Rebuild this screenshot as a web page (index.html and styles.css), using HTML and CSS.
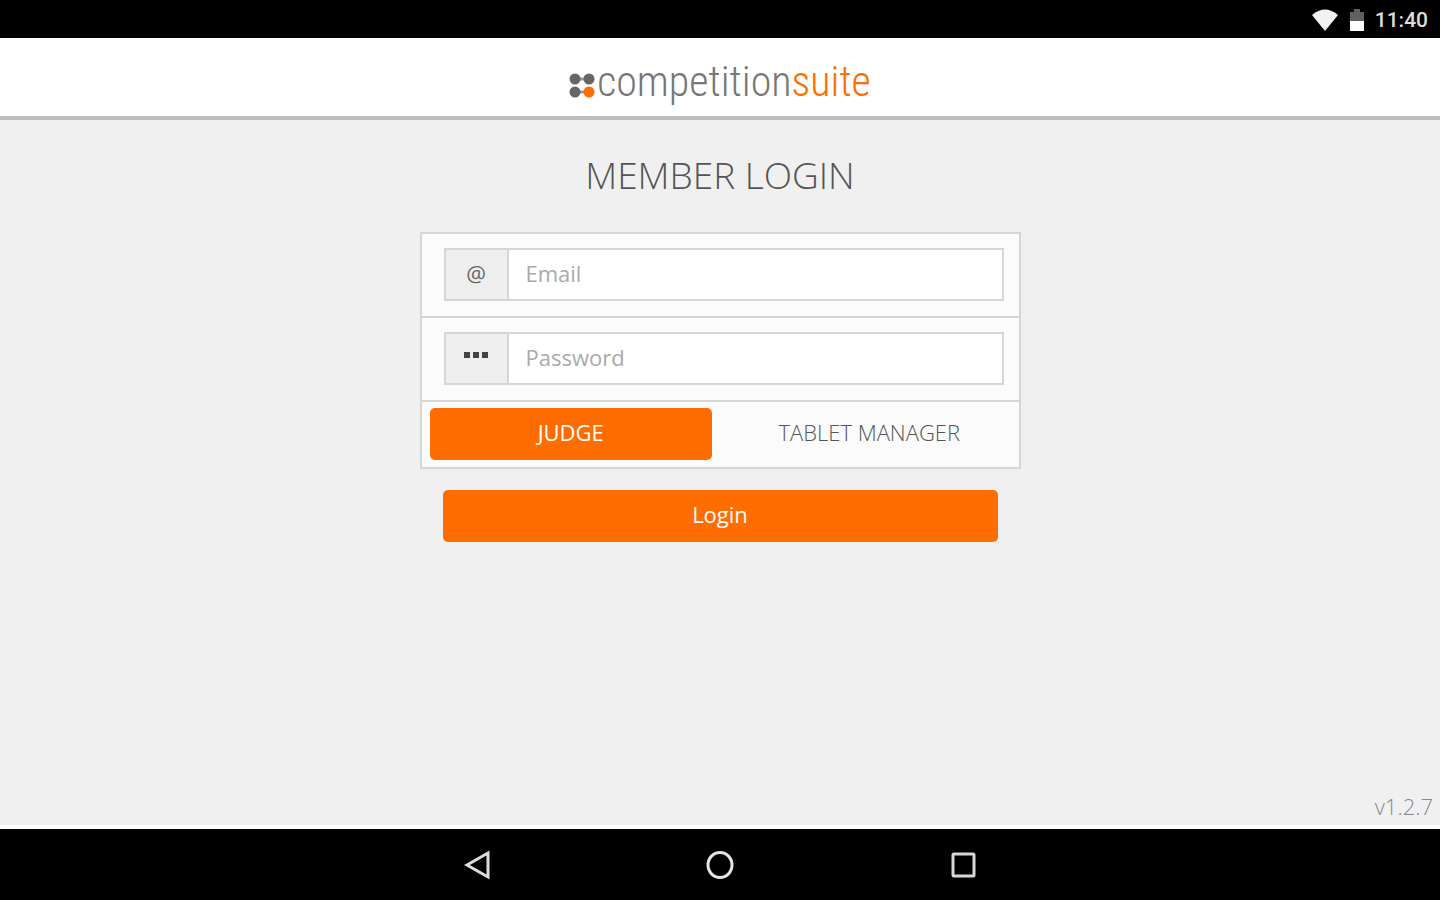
FILE: index.html
```
<!DOCTYPE html>
<html lang="en">
<head>
    <meta charset="UTF-8">
    <meta name="viewport" content="width=device-width, initial-scale=1.0">
    <title>CompetitionSuite - Member Login</title>
    <link rel="stylesheet" href="styles.css">
</head>
<body>
    <!-- Status Bar -->
    <div class="status-bar">
        <svg class="wifi" width="26" height="22" viewBox="0 0 26 22" aria-label="Wi-Fi">
            <path d="M0 6 Q13 -5 26 6 L13 22 Z" fill="#f2f2f2"/>
        </svg>
        <svg class="battery" width="14" height="22" viewBox="0 0 14 22" aria-label="Battery">
            <path d="M0 3 H4 V0 H10 V3 H14 V12 H0 Z" fill="#606060"/>
            <path d="M0 12 H14 V22 H0 Z" fill="#fff"/>
        </svg>
        <span class="clock">11:40</span>
    </div>

    <!-- Header -->
    <header class="header">
        <svg class="logo-dots" width="26" height="26" viewBox="0 0 26 26" aria-hidden="true">
            <path d="M6 6 H20 M6 19 H20" stroke="#999" stroke-width="3"/>
            <circle cx="6" cy="6" r="5.5" fill="#666"/>
            <circle cx="20" cy="6" r="5.5" fill="#666"/>
            <circle cx="6" cy="19" r="5.5" fill="#666"/>
            <circle cx="20" cy="19" r="5.5" fill="#ff6d00"/>
        </svg>
        <span class="logo-text">competition<span class="accent">suite</span></span>
    </header>

    <!-- Login Form -->
    <main class="content">
        <h1>MEMBER LOGIN</h1>
        <form class="login-form">
            <div class="panel">
                <div class="row">
                    <div class="input-group">
                        <label class="addon" for="email" aria-label="Email">@</label>
                        <input type="email" id="email" placeholder="Email">
                    </div>
                </div>
                <div class="row">
                    <div class="input-group">
                        <label class="addon" for="password" aria-label="Password">
                            <svg width="24" height="16" viewBox="0 0 24 16" aria-hidden="true">
                                <path d="M0 3 H6 V9 H0 Z M9 3 H15 V9 H9 Z M18 3 H24 V9 H18 Z" fill="#444"/>
                            </svg>
                        </label>
                        <input type="password" id="password" placeholder="Password">
                    </div>
                </div>
                <div class="roles">
                    <button type="button" class="role active" aria-pressed="true">JUDGE</button>
                    <button type="button" class="role" aria-pressed="false">TABLET MANAGER</button>
                </div>
            </div>
            <button type="submit" class="login-btn">Login</button>
        </form>
        <p class="version">v1.2.7</p>
    </main>

    <!-- Navigation Bar -->
    <nav class="navbar">
        <button type="button" aria-label="Back">
            <svg width="28" height="30" viewBox="0 0 28 30">
                <path d="M5 15 L26 3 V27 Z" fill="none" stroke="#ddd" stroke-width="3"/>
            </svg>
        </button>
        <button type="button" aria-label="Home">
            <svg width="28" height="30" viewBox="0 0 28 30">
                <ellipse cx="14" cy="15" rx="12" ry="12.5" fill="none" stroke="#e4e4e4" stroke-width="3"/>
            </svg>
        </button>
        <button type="button" aria-label="Recent apps">
            <svg width="28" height="30" viewBox="0 0 28 30">
                <rect x="3" y="4" width="21" height="22" rx="1" fill="none" stroke="#d8d8d8" stroke-width="3"/>
            </svg>
        </button>
    </nav>
</body>
</html>
```
FILE: styles.css
```
* {
    box-sizing: border-box;
}

/* Body Styling */
body {
    margin: 0;
    min-height: 100vh;
    display: flex;
    flex-direction: column;
    font-family: "Open Sans", sans-serif;
    font-size: 22px;
    color: #777;
    background-color: #f0f0f0;
}

button,
input {
    font: inherit;
}

button {
    border: none;
    background: none;
    padding: 0;
    cursor: pointer;
}

/* Status Bar */
.status-bar {
    height: 38px;
    padding: 2px 12px 0;
    display: flex;
    align-items: center;
    justify-content: flex-end;
    background-color: #000;
    color: #ddd;
}

.battery {
    margin: 0 11px 0 12px;
}

.clock {
    font-family: Roboto, sans-serif;
    font-size: 21px;
    font-weight: 500;
    line-height: 36px;
}

/* Header */
.header {
    height: 82px;
    padding-top: 10px;
    display: flex;
    align-items: center;
    justify-content: center;
    gap: 2px;
    background-color: #fff;
    border-bottom: 4px solid #bdbdbd;
}

.logo-dots {
    margin-top: 8px;
}

.logo-text {
    font-family: "Roboto Condensed", "Liberation Sans Narrow", sans-serif;
    font-size: 42px;
    font-weight: 300;
    line-height: 52px;
    color: #777;
}

.accent {
    color: #ff6d00;
}

/* Login Form */
.content {
    flex: 1;
    display: flex;
    flex-direction: column;
    align-items: center;
    border-bottom: 4px solid #fff;
}

h1 {
    margin: 28px 0 30px;
    font-size: 37px;
    font-weight: 300;
    line-height: 54px;
    color: #555;
}

.login-form {
    width: 100%;
    max-width: 601px;
}

.panel {
    border: 2px solid #d6d6d6;
    background-color: #fbfbfb;
}

.row {
    padding: 14px 15px 15px 22px;
    border-bottom: 2px solid #d6d6d6;
}

.input-group {
    display: flex;
    height: 53px;
    border: 2px solid #d6d6d6;
    background-color: #fff;
}

.addon {
    width: 63px;
    display: flex;
    align-items: center;
    justify-content: center;
    padding-bottom: 4px;
    border-right: 2px solid #d6d6d6;
    background-color: #eee;
    color: #666;
}

.input-group input {
    flex: 1;
    min-width: 0;
    padding: 0 17px 4px;
    border: none;
    outline: none;
    background: none;
    color: #555;
}

.input-group input::placeholder {
    color: #aaa;
    opacity: 1;
}

/* Role Switch */
.roles {
    display: flex;
    gap: 16px;
    padding: 6px 8px 7px;
}

.role {
    flex: 1;
    height: 52px;
    padding-bottom: 4px;
    border-radius: 5px;
    font-weight: 300;
    color: #555;
}

.role.active,
.login-btn {
    background-color: #ff6d00;
    color: #fff;
}

.login-btn {
    display: block;
    width: calc(100% - 46px);
    height: 52px;
    margin: 21px auto 0;
    padding-bottom: 4px;
    border-radius: 5px;
}

.role.active {
    font-weight: 400;
}

.version {
    margin: auto 7px 4px auto;
    line-height: 30px;
    color: #888;
    font-weight: 300;
}

/* Navigation Bar */
.navbar {
    height: 71px;
    display: flex;
    align-items: center;
    justify-content: center;
    gap: 15%;
    background-color: #000;
}

.navbar button,
.navbar svg {
    display: block;
}
```
